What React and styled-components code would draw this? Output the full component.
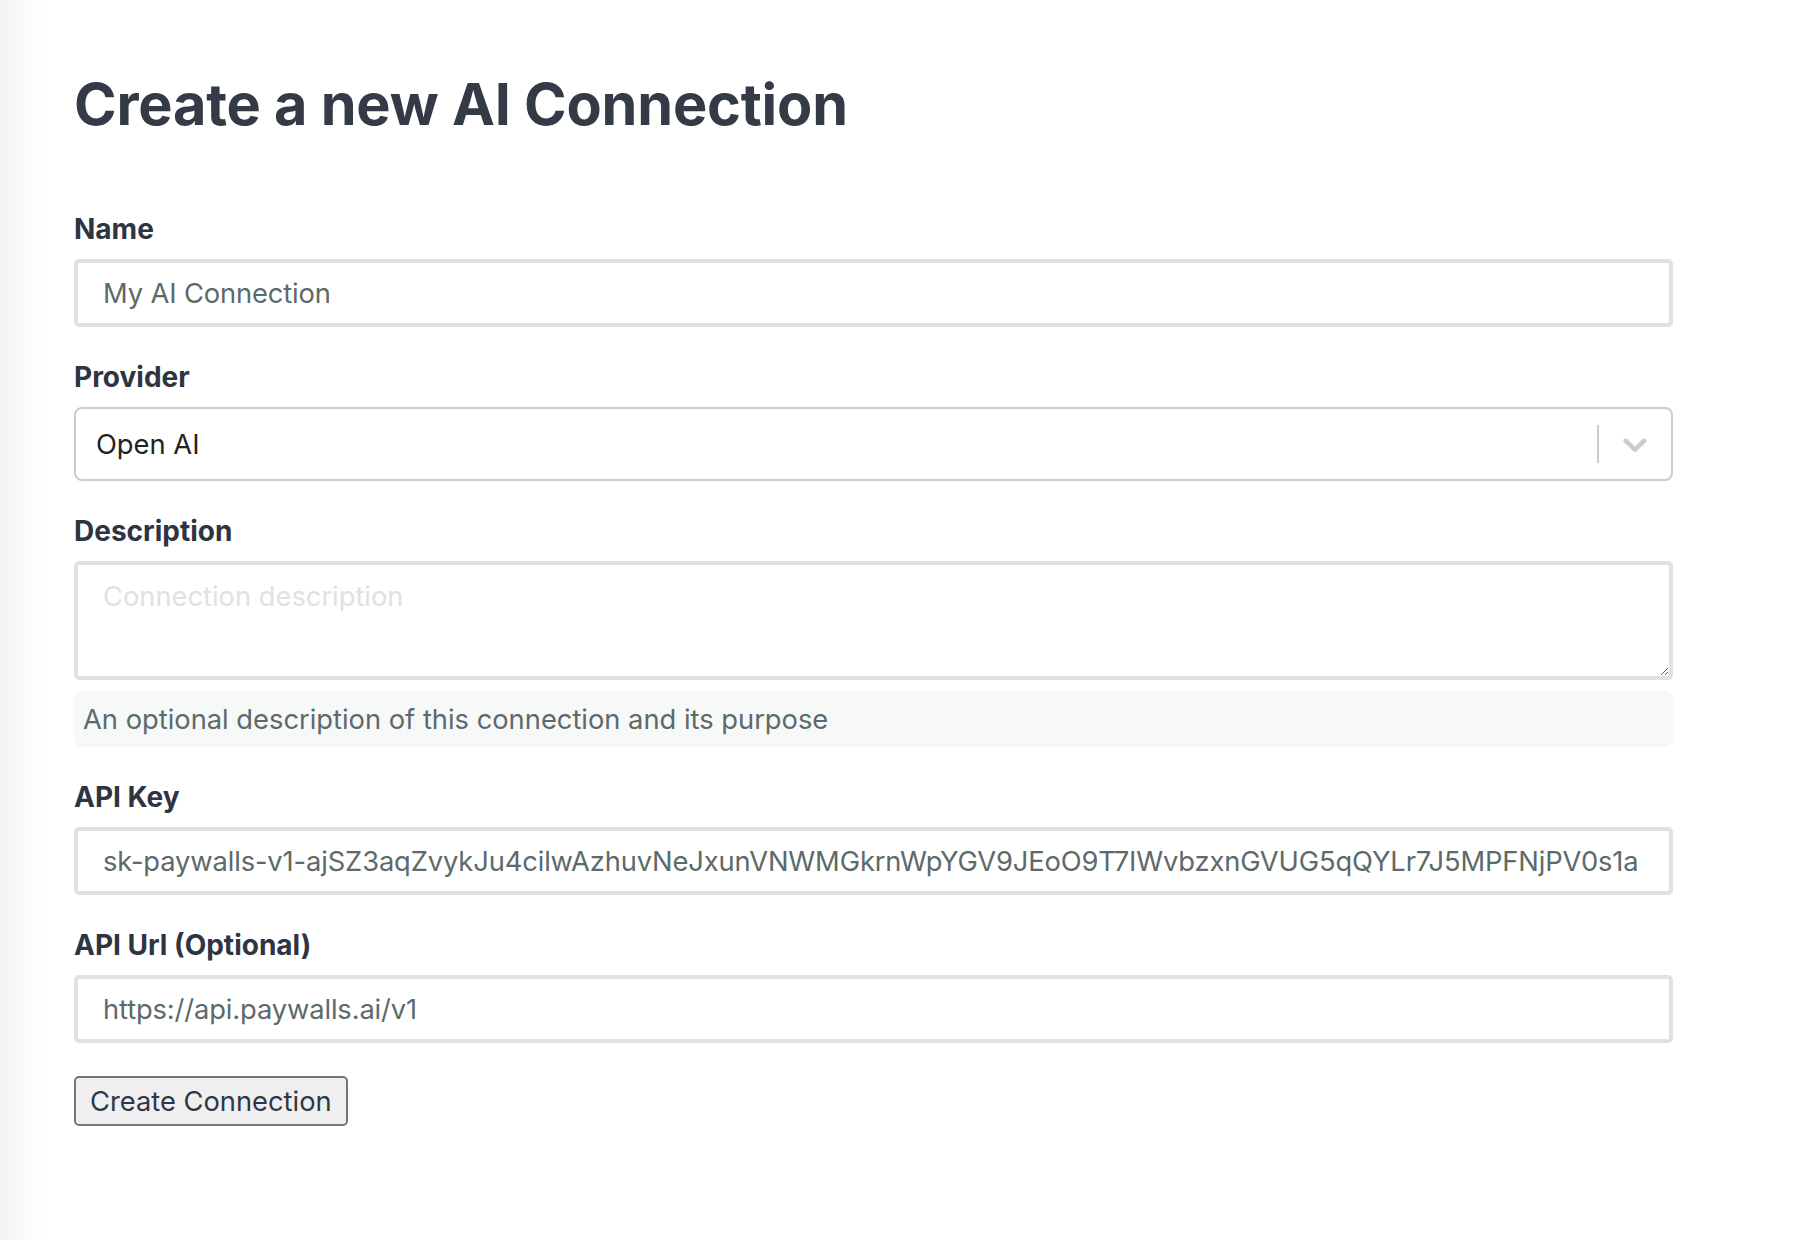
import React from 'react';
import styled, { createGlobalStyle } from 'styled-components';

const GlobalStyle = createGlobalStyle`
  html, body {
    margin: 0;
    padding: 0;
    min-height: 100%;
  }

  body {
    min-height: 1240px;
    font-family: Inter, "Noto Sans", sans-serif;
    background: linear-gradient(to right, #f1f2f4 0, #f8f9fa 22px, #ffffff 44px);
  }
`;

const Page = styled.main`
  padding: 69px 0 0 74px;
`;

const Form = styled.form`
  display: flex;
  flex-direction: column;
  gap: 32px;
  width: 1599px;
`;

const Title = styled.h1`
  margin: 0 0 72px;
  font-size: 57.6px;
  line-height: 70px;
  font-weight: 700;
  color: #343a46;
  letter-spacing: -0.2px;
`;

const Field = styled.div`
  display: flex;
  flex-direction: column;
  gap: 12px;
`;

const Label = styled.label`
  font-size: 28px;
  line-height: 36px;
  font-weight: 700;
  color: #2e3441;
`;

const TextInput = styled.input`
  box-sizing: border-box;
  width: 100%;
  height: 68px;
  padding: 0 20px 0 25px;
  border: 4px solid #e0e2df;
  border-radius: 5px;
  background: #fff;
  font-family: inherit;
  font-size: 27.3px;
  letter-spacing: -0.12px;
  color: #5c6a6a;
  outline: none;
`;

const TextArea = styled.textarea`
  box-sizing: border-box;
  width: 100%;
  height: 119px;
  padding: 11px 25px;
  border: 4px solid #e0e2df;
  border-radius: 5px;
  background: #fff;
  font-family: inherit;
  font-size: 27.3px;
  line-height: 42px;
  color: #5c6a6a;
  resize: vertical;
  outline: none;

  &::placeholder {
    color: #e0e2e0;
    opacity: 1;
  }
`;

const Helper = styled.div`
  margin-top: -1px;
  height: 56px;
  display: flex;
  align-items: center;
  padding: 0 9px;
  border-radius: 8px;
  background: #f7f8f8;
  font-size: 27.3px;
  color: #5c6a6a;
`;

const Select = styled.div`
  box-sizing: border-box;
  display: flex;
  align-items: center;
  height: 74px;
  border: 2px solid #cccccc;
  border-radius: 8px;
  background: #fff;
`;

const SelectValue = styled.div`
  flex: 1;
  padding: 0 20px;
  font-size: 27.3px;
  color: #222222;
`;

const Separator = styled.span`
  align-self: stretch;
  width: 2px;
  margin: 16px 0;
  background: #cccccc;
`;

const Indicator = styled.div`
  display: flex;
  padding: 16px;
  color: #cccccc;
`;

const Button = styled.button`
  align-self: flex-start;
  margin-top: 1px;
  box-sizing: border-box;
  height: 50px;
  padding: 0 14px;
  border: 2px solid #767676;
  border-radius: 5px;
  background: #efefef;
  font-family: inherit;
  font-size: 27.3px;
  color: #2f3746;
`;

const Chevron = () => (
  <svg width="40" height="40" viewBox="0 0 20 20" fill="currentColor" aria-hidden="true">
    <path d="M4.516 7.548c0.436-0.446 1.043-0.481 1.576 0l3.908 3.747 3.908-3.747c0.533-0.481 1.141-0.446 1.574 0 0.436 0.445 0.408 1.197 0 1.615-0.406 0.418-4.695 4.502-4.695 4.502-0.217 0.223-0.502 0.335-0.787 0.335s-0.57-0.112-0.789-0.335c0 0-4.287-4.084-4.695-4.502s-0.436-1.17 0-1.615z" />
  </svg>
);

const App = () => (
  <>
    <GlobalStyle />
    <Page>
      <Title>Create a new AI Connection</Title>
      <Form onSubmit={(e) => e.preventDefault()}>
        <Field>
          <Label htmlFor="name">Name</Label>
          <TextInput id="name" defaultValue="My AI Connection" />
        </Field>
        <Field>
          <Label>Provider</Label>
          <Select>
            <SelectValue>Open AI</SelectValue>
            <Separator />
            <Indicator>
              <Chevron />
            </Indicator>
          </Select>
        </Field>
        <Field>
          <Label htmlFor="description">Description</Label>
          <TextArea id="description" placeholder="Connection description" />
          <Helper>An optional description of this connection and its purpose</Helper>
        </Field>
        <Field>
          <Label htmlFor="apiKey">API Key</Label>
          <TextInput
            id="apiKey"
            defaultValue="sk-paywalls-v1-ajSZ3aqZvykJu4cilwAzhuvNeJxunVNWMGkrnWpYGV9JEoO9T7IWvbzxnGVUG5qQYLr7J5MPFNjPV0s1a"
          />
        </Field>
        <Field>
          <Label htmlFor="apiUrl">API Url (Optional)</Label>
          <TextInput id="apiUrl" defaultValue="https://api.paywalls.ai/v1" />
        </Field>
        <Button type="submit">Create Connection</Button>
      </Form>
    </Page>
  </>
);

export default App;
